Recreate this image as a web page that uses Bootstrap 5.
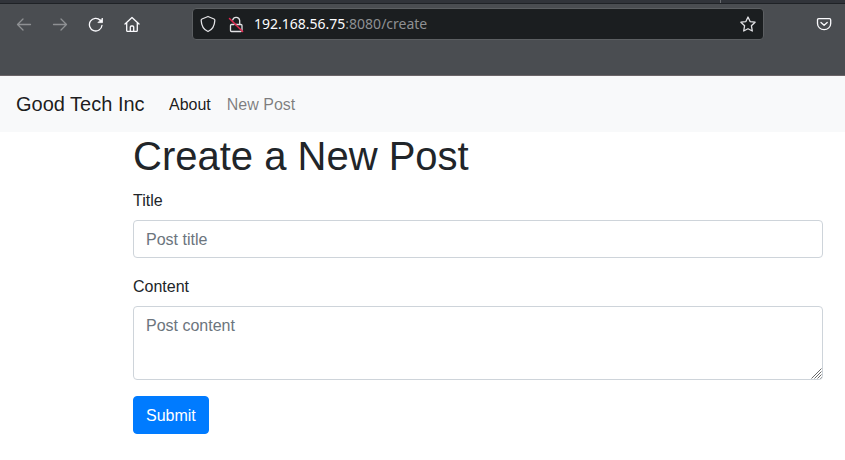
<!DOCTYPE html>
<html lang="en">
<head>
<meta charset="utf-8">
<meta name="viewport" content="width=device-width, initial-scale=1">
<title>Create a New Post</title>
<link href="https://cdn.jsdelivr.net/npm/bootstrap@5.3.0/dist/css/bootstrap.min.css" rel="stylesheet">
<style>
body { font-family: "Liberation Sans", Arial, sans-serif; color: #212529; height: 460px; overflow: hidden; }
.browser-top { height: 76px; background: #4a4d51; border-bottom: 1px solid #6b6568; }
.tab-strip { height: 4px; background: #31343a; border-bottom: 1px solid #1f2226; }
.tab-strip i { width: 1px; height: 3px; margin-right: 124px; background: #6a6d71; }
.tool-row { height: 40px; padding-left: 16px; color: #fbfbfe; }
.tool-row svg { display: block; flex: none; fill: none; stroke: currentColor; stroke-width: 1.3; stroke-linecap: round; stroke-linejoin: round; }
.tool-row .tool-dim { color: #8e9093; }
.nav-icons { gap: 20px; width: 176px; }
.pocket { margin-right: 13px; }
.url-field { width: 572px; height: 32px; padding: 0 7px; background: #1b1e20; border: 1px solid #5c5f62; border-radius: 4px; font: 14px/30px "Noto Sans", sans-serif; }
.url-field svg { color: #e2e2e5; }
.url-field .lock { margin-left: 12px; }
.url-text { margin-left: 10px; }
.site-nav { height: 56px; padding: 8px 16px; background: #f8f9fa; }
.site-nav .navbar-brand { margin-right: 16.4px; color: rgba(0,0,0,.9); }
.site-nav .nav-link { padding: 9px 8px 7px; color: rgba(0,0,0,.5); }
.site-nav .nav-link.active { color: rgba(0,0,0,.9); }
.post-form { width: 690px; margin-left: 133px; }
.post-form h1 { font-size: 40px; font-weight: 400; }
.post-form label { padding-top: 1px; height: 24px; }
.post-form .form-control { border-color: #ced4da; border-radius: 4px; height: 38px; padding: 7px 12px 5px; }
.post-form .form-control::placeholder { color: #6c757d; }
.post-form textarea.form-control { display: block; height: 74px; resize: none; }
.grip { right: 1px; bottom: 1px; }
.post-form .btn { background: #007bff; border-color: #007bff; border-radius: 4px; padding: 7px 12px 5px; }
</style>
</head>
<body>
<header class="browser-top">
  <div class="tab-strip d-flex justify-content-end"><i></i></div>
  <div class="tool-row d-flex align-items-center">
    <div class="nav-icons d-flex">
      <svg class="tool-dim" width="16" height="16" viewBox="0 0 16 16"><path d="M14.500 8.500H1.500M7 3 1.500 8.500 7 14"/></svg>
      <svg class="tool-dim" width="16" height="16" viewBox="0 0 16 16"><path d="M1.500 8.500h13M9 3l5.500 5.500L9 14"/></svg>
      <svg width="16" height="16" viewBox="0 0 16 16"><path d="M12.300 4.300A6.300 6.300 0 1 0 14 9.300"/><path d="M14.500 2.400v4.200h-4.200z" fill="currentColor" stroke-width=".8"/></svg>
      <svg width="16" height="16" viewBox="0 0 16 16"><path d="M1 8 8 1.500 15 8M2.700 6.800v7.700q0 .9.900.9h8.800q.9 0 .9-.9V6.800M6.300 15.200v-4.200q0-1 1-1h1.400q1 0 1 1v4.200"/></svg>
    </div>
    <div class="url-field d-flex align-items-center">
      <svg width="16" height="18" viewBox="0 0 16 18"><path d="M8 1.500 14 4q.9.400.8 1.400C14.600 11 12.500 14.500 8 16.500 3.500 14.500 1.400 11 1.200 5.400 1.100 4.400 2 4 2 4z"/></svg>
      <svg class="lock" width="16" height="18" viewBox="0 0 16 18"><path d="M4.700 5A3.600 3.600 0 0 1 11.700 5.500V9M7.500 9.500h5.500q1 0 1 1v5M13 16.500H3.500q-1 0-1-1v-5q0-1 1-1h2.500"/><path d="M1.500 3.500 14.600 16.500" stroke="#e22850" stroke-width="1.500"/></svg>
      <span class="url-text flex-grow-1">192.168.56.75<span class="tool-dim">:8080/create</span></span>
      <svg width="16" height="16" viewBox="0 0 16 16"><path d="m8 1 2.100 4.600 5 .6-3.700 3.500.9 5.300L8 12.700 3.700 15l.9-5.300L.9 6.200l5-.6z"/></svg>
    </div>
    <svg class="pocket ms-auto" width="16" height="16" viewBox="0 0 16 16"><path d="M2.800 2.600h10.600q1.300 0 1.300 1.300v3.500a6.600 6.300 0 0 1-13.200 0V3.900q0-1.300 1.300-1.300zM5 6.400l3.100 2.800 3.100-2.800"/></svg>
  </div>
</header>
<nav class="site-nav navbar navbar-expand justify-content-start">
  <a class="navbar-brand" href="#">Good Tech Inc</a>
  <div class="navbar-nav">
    <a class="nav-link active" href="#">About</a>
    <a class="nav-link" href="#">New Post</a>
  </div>
</nav>
<main class="post-form">
  <h1 class="mb-2">Create a New Post</h1>
  <form>
    <div class="mb-3">
      <label class="d-block mb-2" for="title">Title</label>
      <input class="form-control" id="title" type="text" placeholder="Post title">
    </div>
    <div class="mb-3">
      <label class="d-block mb-2" for="content">Content</label>
      <div class="position-relative">
        <textarea class="form-control" id="content" placeholder="Post content"></textarea>
        <svg class="grip position-absolute" width="11" height="11" viewBox="0 0 11 11" fill="none" stroke="#6a6a6a"><path d="M.5 10.500l10-10M3.500 10.500l7-7M6.500 10.500l4-4M9.500 10.500l1-1"/></svg>
      </div>
    </div>
    <button class="btn btn-primary" type="button">Submit</button>
  </form>
</main>
<script src="https://cdn.jsdelivr.net/npm/bootstrap@5.3.0/dist/js/bootstrap.bundle.min.js"></script>
</body>
</html>
